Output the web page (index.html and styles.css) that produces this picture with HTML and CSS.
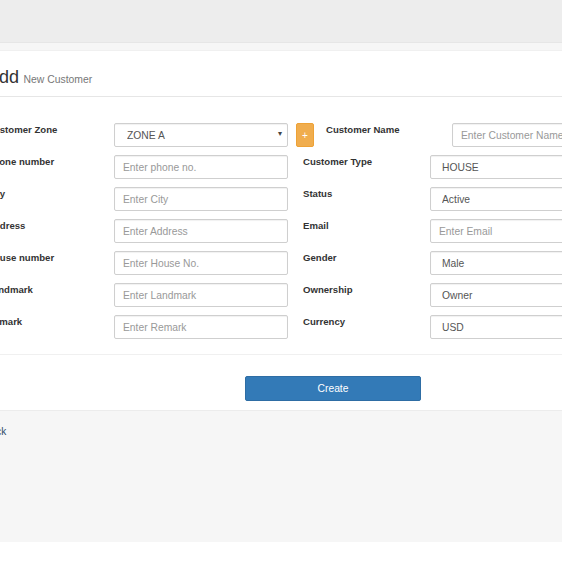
FILE: index.html
```html
<!DOCTYPE html>
<html lang="en">

<head>
    <meta charset="UTF-8">
    <meta name="viewport" content="width=device-width, initial-scale=1.0">
    <title>Add New Customer</title>
    <link rel="stylesheet" href="styles.css">
</head>

<body>
    <div class="topbar"></div>

    <div class="main">
        <div class="panel">
            <div class="panel-heading">
                <span class="title">Add</span> <small>New Customer</small>
            </div>

            <form class="panel-body">
                <div class="form-row">
                    <label>Customer Zone</label>
                    <div class="select-wrap">
                        <select class="field select">
                            <option>ZONE A</option>
                            <option>ZONE B</option>
                        </select>
                        <span class="caret">&#9662;</span>
                    </div>
                    <button type="button" class="btn-add">+</button>
                    <label class="label-shift">Customer Name</label>
                    <input class="field name-field" type="text" placeholder="Enter Customer Name">
                </div>

                <div class="form-row">
                    <label>Phone number</label>
                    <input class="field" type="text" placeholder="Enter phone no.">
                    <label class="right-label">Customer Type</label>
                    <select class="field select">
                        <option>HOUSE</option>
                        <option>SHOP</option>
                    </select>
                </div>

                <div class="form-row">
                    <label>City</label>
                    <input class="field" type="text" placeholder="Enter City">
                    <label class="right-label">Status</label>
                    <select class="field select">
                        <option>Active</option>
                        <option>Inactive</option>
                    </select>
                </div>

                <div class="form-row">
                    <label>Address</label>
                    <input class="field" type="text" placeholder="Enter Address">
                    <label class="right-label">Email</label>
                    <input class="field" type="text" placeholder="Enter Email">
                </div>

                <div class="form-row">
                    <label>House number</label>
                    <input class="field" type="text" placeholder="Enter House No.">
                    <label class="right-label">Gender</label>
                    <select class="field select">
                        <option>Male</option>
                        <option>Female</option>
                    </select>
                </div>

                <div class="form-row">
                    <label>Landmark</label>
                    <input class="field" type="text" placeholder="Enter Landmark">
                    <label class="right-label">Ownership</label>
                    <select class="field select">
                        <option>Owner</option>
                        <option>Tenant</option>
                    </select>
                </div>

                <div class="form-row">
                    <label>Remark</label>
                    <input class="field" type="text" placeholder="Enter Remark">
                    <label class="right-label">Currency</label>
                    <select class="field select">
                        <option>USD</option>
                        <option>KHR</option>
                    </select>
                </div>
            </form>

            <div class="panel-footer">
                <button type="button" class="btn-create">Create</button>
            </div>
        </div>

        <div class="below">
            <a href="#" class="back-link">Back</a>
        </div>
    </div>
</body>

</html>
```

FILE: styles.css
```css
html, body {
    overflow: hidden;
}

body {
    font-family: 'Liberation Sans', Arial, Helvetica, sans-serif;
    margin: 0;
    padding: 0;
    background: #ffffff;
    color: #333;
}

.topbar {
    height: 42px;
    background: #ededed;
    border-bottom: 1px solid #e6e6e6;
}

.main {
    background: #f6f6f6;
    padding-top: 7px;
    height: 492px;
}

.panel {
    background: #ffffff;
    margin-left: -30px;
    width: 720px;
    border-top: 1px solid #f0f0f0;
}

.panel-heading {
    height: 20px;
    padding: 16px 17px 9px;
    line-height: 20px;
    border-bottom: 1px solid #e6e6e6;
}

.panel-heading .title {
    font-size: 18px;
    color: #333;
}

.panel-heading small {
    font-size: 10.4px;
    color: #777;
}

.panel-body {
    padding: 26px 17px 15px;
    border-bottom: 1px solid #f0f0f0;
}

.form-row {
    display: flex;
    align-items: flex-start;
    margin-bottom: 8px;
}

.form-row:last-child {
    margin-bottom: 0;
}

.form-row label {
    width: 127px;
    flex: none;
    font-size: 9.6px;
    font-weight: bold;
    line-height: 11px;
    padding-top: 1px;
    color: #333;
}

.form-row .right-label {
    margin-left: 15px;
}

.form-row .label-shift {
    width: 126px;
}

.field {
    width: 174px;
    height: 24px;
    box-sizing: border-box;
    flex: none;
    border: 1px solid #cfcfcf;
    border-radius: 2px;
    box-shadow: inset 0 1px 1px rgba(0, 0, 0, 0.06);
    padding: 0 8px;
    font-family: inherit;
    font-size: 10.3px;
    color: #555;
    background: #ffffff;
    outline: none;
}

.field::placeholder {
    color: #999;
}

.select {
    appearance: none;
    -webkit-appearance: none;
    padding-left: 11px;
}

.select-wrap {
    position: relative;
    width: 174px;
    flex: none;
}

.select-wrap .select {
    padding-left: 12px;
}

.caret {
    position: absolute;
    right: 6px;
    top: 6px;
    font-size: 8px;
    color: #444;
    pointer-events: none;
}

.btn-add {
    width: 18px;
    height: 24px;
    flex: none;
    margin: 0 12px 0 8px;
    padding: 0;
    border: 1px solid #eea236;
    border-radius: 2px;
    background: #f0ad4e;
    color: #ffffff;
    font-family: inherit;
    font-size: 10px;
    cursor: pointer;
}

.panel-footer {
    padding: 21px 17px 9px 275px;
    border-bottom: 1px solid #ececec;
}

.btn-create {
    width: 176px;
    height: 25px;
    border: 1px solid #2e6da4;
    border-radius: 2px;
    background: #337ab7;
    color: #ffffff;
    font-family: inherit;
    font-size: 10.3px;
    cursor: pointer;
}

.below {
    padding: 13px 0 0;
    margin-left: -16px;
    line-height: 12px;
}

.back-link {
    font-size: 10px;
    color: #2f4a66;
    text-decoration: none;
}
```
